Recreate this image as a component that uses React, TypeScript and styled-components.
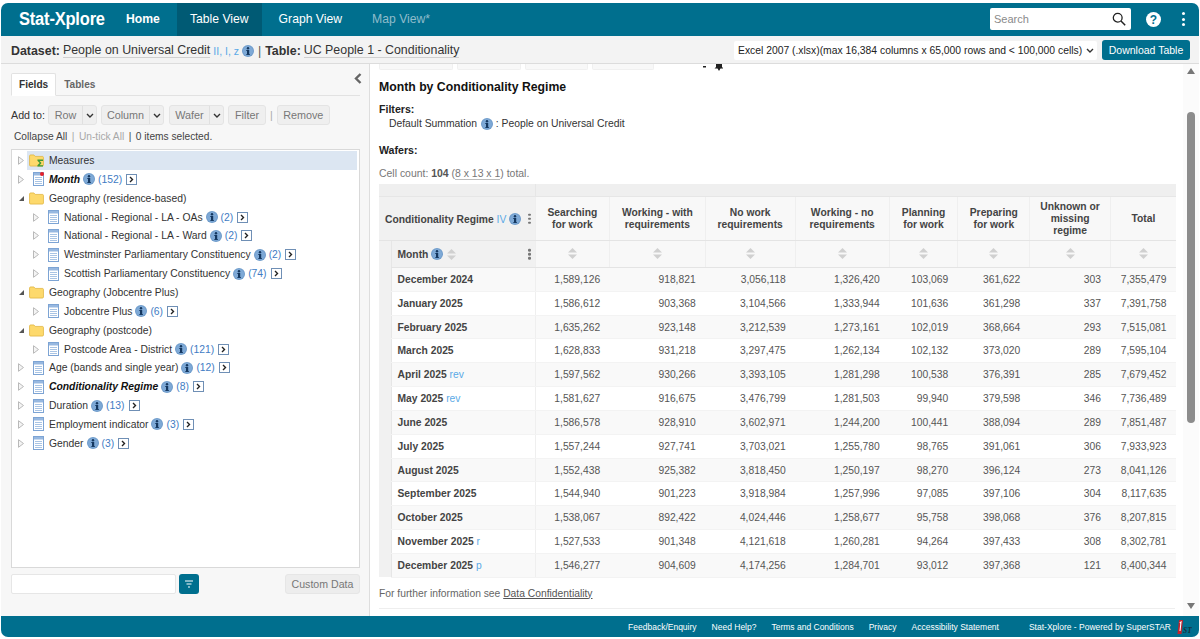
import React from "react";
import styled, { createGlobalStyle } from "styled-components";

const Global = createGlobalStyle`
  html, body { margin: 0; padding: 0; background: #fff; height: 100%; overflow: hidden; }
  body { font-family: "Liberation Sans", Arial, sans-serif; font-size: 11px; color: #333; }
  #root { height: 100%; }
`;

const Frame = styled.div`
  width: 1198px;
  height: 634px;
  margin: 3px 1px 2px;
  display: flex;
  flex-direction: column;
  background: #f7f7f7;
  border-radius: 7px;
  overflow: hidden;
`;

const TopBar = styled.header`
  height: 33px;
  flex: none;
  background: #006f8e;
  display: flex;
  align-items: stretch;
  color: #fff;
`;
const Brand = styled.div`
  width: 108px;
  padding-left: 18px;
  box-sizing: border-box;
  font-size: 18px;
  font-weight: 700;
  line-height: 32px;
  white-space: nowrap;
`;
const BrandText = styled.span`
  display: inline-block;
  transform: scaleX(0.915);
  transform-origin: left center;
  letter-spacing: -0.2px;
`;
const NavItem = styled.div<{ $active?: boolean; $dim?: boolean; $bold?: boolean; $px: number }>`
  display: flex;
  align-items: center;
  padding: 0 ${(p) => p.$px}px 1px;
  font-size: 12.2px;
  font-weight: ${(p) => (p.$bold ? 700 : 400)};
  background: ${(p) => (p.$active ? "#005a74" : "transparent")};
  color: ${(p) => (p.$dim ? "#8fbccb" : "#fff")};
`;
const TopRight = styled.div`
  margin-left: auto;
  padding-bottom: 1px;
  display: flex;
  align-items: center;
`;
const SearchBox = styled.div`
  width: 141px;
  height: 22px;
  background: #fff;
  border-radius: 2px;
  display: flex;
  align-items: center;
  justify-content: space-between;
  padding: 0 5px 0 4px;
  box-sizing: border-box;
  color: #8a8a8a;
  font-size: 11px;
`;
const HelpWrap = styled.div`
  margin-left: 15px;
  display: flex;
  align-items: center;
`;
const Kebab = styled.div`
  margin: 0 14px 0 21px;
  width: 3px;
  display: flex;
  flex-direction: column;
  gap: 2.5px;
`;
const KebabDot = styled.span<{ $color?: string; $size?: number }>`
  display: block;
  width: ${(p) => p.$size ?? 3}px;
  height: ${(p) => p.$size ?? 3}px;
  border-radius: 50%;
  background: ${(p) => p.$color ?? "#fff"};
`;

const SubBar = styled.div`
  height: 28px;
  flex: none;
  box-sizing: border-box;
  background: #f3f3f3;
  border-bottom: 1px solid #dcdcdc;
  display: flex;
  align-items: center;
  padding: 0 9px 0 10px;
  font-size: 12.4px;
  color: #333;
`;
const DatasetGroup = styled.div`
  display: flex;
  align-items: center;
  padding-top: 2px;
  white-space: nowrap;
`;
const Strong = styled.b`
  font-weight: 700;
  margin-right: 3px;
`;
const Dashed = styled.span`
  border-bottom: 1px solid #d0d0d0;
  line-height: 13px;
`;
const Annot = styled.span`
  color: #5aa9e6;
  font-size: 10.5px;
  margin: 0 3px;
`;
const Sep = styled.span`
  margin: 0 4px;
  color: #555;
`;
const SelectBox = styled.div`
  margin-left: auto;
  margin-top: 1px;
  width: 363px;
  height: 19px;
  box-sizing: border-box;
  background: #fff;
  border-radius: 2px;
  display: flex;
  align-items: center;
  justify-content: space-between;
  padding: 0 3px 0 4px;
  font-size: 10.35px;
  color: #222;
  white-space: nowrap;
`;
const PrimaryBtn = styled.div`
  margin-left: 5px;
  width: 88px;
  height: 20px;
  border-radius: 3px;
  background: #006f8e;
  color: #fff;
  font-size: 10.5px;
  display: flex;
  align-items: center;
  justify-content: center;
`;

const Main = styled.div`
  flex: 1;
  min-height: 0;
  display: flex;
`;

const Left = styled.aside`
  width: 369px;
  flex: none;
  box-sizing: border-box;
  background: #f7f7f7;
  border-right: 1px solid #dedede;
  padding: 9px 9px 0 10px;
  display: flex;
  flex-direction: column;
  position: relative;
`;
const Collapse = styled.div`
  position: absolute;
  right: 7px;
  top: 9px;
`;
const Tabs = styled.div`
  display: flex;
  height: 22px;
  border-bottom: 1px solid #e2e2e2;
  width: 349px;
  box-sizing: content-box;
`;
const Tab = styled.div<{ $active?: boolean }>`
  padding: 0 7px;
  font-size: 10.1px;
  font-weight: 700;
  line-height: 21px;
  height: 23px;
  box-sizing: border-box;
  color: ${(p) => (p.$active ? "#333" : "#666")};
  background: ${(p) => (p.$active ? "#fff" : "transparent")};
  border: 1px solid ${(p) => (p.$active ? "#e2e2e2" : "transparent")};
  border-bottom-color: ${(p) => (p.$active ? "#fff" : "transparent")};
  border-radius: 2px 2px 0 0;
`;
const AddRow = styled.div`
  display: flex;
  align-items: center;
  margin-top: 9px;
  height: 20px;
  font-size: 10.7px;
  color: #333;
`;
const AddLabel = styled.span`
  width: 33px;
  white-space: nowrap;
`;
const GreyBtn = styled.div<{ $w: number; $ml?: number }>`
  width: ${(p) => p.$w}px;
  margin-left: ${(p) => p.$ml ?? 4}px;
  height: 20px;
  box-sizing: border-box;
  background: #efefef;
  border: 1px solid #e4e4e4;
  border-radius: 3px;
  color: #777;
  font-size: 10.8px;
  display: flex;
  align-items: center;
`;
const BtnLabel = styled.span`
  flex: 1;
  text-align: center;
`;
const BtnCaret = styled.span`
  width: 13px;
  height: 100%;
  border-left: 1px solid #e0e0e0;
  display: flex;
  align-items: center;
  justify-content: center;
`;
const Divider = styled.span`
  margin-left: 4px;
  color: #aaa;
`;
const ActionRow = styled.div`
  display: flex;
  align-items: center;
  gap: 4.5px;
  margin: 4px 0 0 3px;
  height: 15px;
  font-size: 10.2px;
  color: #444;
`;
const Faint = styled.span`
  color: #a8a8a8;
`;
const TreeBox = styled.div`
  margin-top: 5px;
  width: 349px;
  height: 419px;
  box-sizing: border-box;
  background: #fff;
  border: 1px solid #d9d9d9;
  padding: 1px 2px 0 0;
`;
const TreeRow = styled.div<{ $level?: number }>`
  height: 18.87px;
  display: flex;
  align-items: center;
  padding-left: ${(p) => (p.$level ? 21 : 6)}px;
  font-size: 10.35px;
  color: #333;
  white-space: nowrap;
  position: relative;
`;
const Selection = styled.span`
  position: absolute;
  left: 15px;
  right: 0;
  top: 0;
  bottom: 0;
  background: #dce6f2;
`;
const Toggle = styled.span`
  width: 9px;
  height: 10px;
  flex: none;
  display: flex;
  align-items: center;
  position: relative;
`;
const TreeIconBox = styled.span`
  width: 16px;
  height: 16px;
  margin-left: 2px;
  padding-right: 1px;
  box-sizing: border-box;
  flex: none;
  display: flex;
  align-items: center;
  justify-content: flex-end;
  position: relative;
`;
const RowLabel = styled.span<{ $em?: boolean }>`
  margin-left: 4px;
  position: relative;
  font-weight: ${(p) => (p.$em ? 700 : 400)};
  font-style: ${(p) => (p.$em ? "italic" : "normal")};
  color: ${(p) => (p.$em ? "#111" : "#333")};
`;
const Count = styled.span`
  color: #3f7cc4;
  margin-left: 3px;
`;
const InfoWrap = styled.span<{ $ml?: number }>`
  display: inline-flex;
  margin-left: ${(p) => p.$ml ?? 3}px;
  vertical-align: -2px;
`;
const MoreBtn = styled.span`
  width: 9px;
  height: 9px;
  margin-left: 4px;
  border: 1px solid #6f8fb5;
  display: inline-flex;
  align-items: center;
  justify-content: center;
  background: #fff;
  flex: none;
`;
const SearchRow = styled.div`
  display: flex;
  align-items: center;
  margin-top: 6px;
`;
const FilterInput = styled.div`
  width: 165px;
  height: 20px;
  box-sizing: border-box;
  background: #fff;
  border: 1px solid #e6e6e6;
  border-radius: 2px;
`;
const FilterBtn = styled.div`
  margin-left: 3px;
  width: 20px;
  height: 20px;
  background: #006f8e;
  border-radius: 3px;
  display: flex;
  align-items: center;
  justify-content: center;
`;
const CustomBtn = styled.div`
  margin-left: auto;
  width: 75px;
  height: 20px;
  background: #ededed;
  border: 1px solid #e6e6e6;
  box-sizing: border-box;
  border-radius: 3px;
  color: #777;
  font-size: 10.6px;
  display: flex;
  align-items: center;
  justify-content: center;
`;

const Right = styled.section`
  flex: 1;
  min-width: 0;
  display: flex;
  background: #fff;
`;
const Content = styled.div`
  flex: 1;
  min-width: 0;
  box-sizing: border-box;
  padding: 0 8px 0 9px;
  display: flex;
  flex-direction: column;
  position: relative;
`;
const HiddenTabs = styled.div`
  display: flex;
  gap: 4px;
  height: 6px;
`;
const HiddenTab = styled.span<{ $w: number }>`
  width: ${(p) => p.$w}px;
  height: 6px;
  background: #f8f8f8;
  border: 1px solid #f0f0f0;
  border-top: 0;
  box-sizing: border-box;
  border-radius: 0 0 2px 2px;
`;
const Title = styled.h2`
  margin: 10px 0 0;
  font-size: 12.25px;
  line-height: 15px;
  font-weight: 700;
  color: #111;
`;
const MetaLabel = styled.div<{ $mt: number }>`
  margin-top: ${(p) => p.$mt}px;
  font-size: 10.6px;
  font-weight: 700;
  line-height: 13px;
  color: #222;
`;
const FilterLine = styled.div`
  margin: 1px 0 0 10px;
  font-size: 10.35px;
  line-height: 14px;
  color: #333;
  display: flex;
  align-items: center;
`;
const CellCount = styled.div`
  margin-top: 10px;
  padding-bottom: 5px;
  height: 12px;
  font-size: 10.45px;
  line-height: 13px;
  color: #777;
`;
const CountEm = styled.b`
  color: #555;
`;
const CountLink = styled.span`
  border-bottom: 1px solid #bbb;
`;
const Table = styled.table`
  border-collapse: collapse;
  table-layout: fixed;
  width: 797px;
  font-size: 10.3px;
`;
const TopStrip = styled.td`
  height: 12px;
  padding: 0;
  background: #efefef;
  border-bottom: 1px solid #e6e6e6;
`;
const TopStripEnd = styled(TopStrip)`
  border-left: 1px solid #e6e6e6;
`;
const CornerHead = styled.th`
  height: 43px;
  padding: 0 0 0 6px;
  background: #f1f1f1;
  border-bottom: 1px solid #e4e4e4;
  text-align: left;
  font-weight: 700;
  color: #444;
  white-space: nowrap;
  position: relative;
`;
const ColHead = styled.th`
  padding: 0 4px;
  background: #f8f8f8;
  border-left: 1px solid #efefef;
  border-bottom: 1px solid #e4e4e4;
  font-weight: 700;
  color: #444;
  line-height: 12px;
  text-align: center;
`;
const StubGutter = styled.td`
  padding: 0;
  background: #f1f1f1;
`;
const MonthHead = styled.th`
  height: 26px;
  padding: 0 0 0 6px;
  background: #f1f1f1;
  border-left: 1px solid #e6e6e6;
  border-bottom: 1px solid #e4e4e4;
  text-align: left;
  font-weight: 700;
  color: #444;
  white-space: nowrap;
  position: relative;
`;
const SortCell = styled.th`
  padding: 0;
  background: #f8f8f8;
  border-left: 1px solid #efefef;
  border-bottom: 1px solid #e4e4e4;
  text-align: center;
`;
const RowHead = styled.th<{ $odd: boolean }>`
  height: 22.84px;
  padding: 0 0 0 6px;
  box-sizing: content-box;
  text-align: left;
  font-weight: 700;
  color: #444;
  white-space: nowrap;
  background: ${(p) => (p.$odd ? "#fff" : "#f9f9f9")};
  border-left: 1px solid #e6e6e6;
  border-bottom: 1px solid #f3f3f3;
`;
const ValueCell = styled.td<{ $odd: boolean }>`
  padding: 0 9.5px 0 0;
  text-align: right;
  color: #555;
  background: ${(p) => (p.$odd ? "#fff" : "#f9f9f9")};
  border-bottom: 1px solid #f3f3f3;
`;
const FirstValue = styled(ValueCell)`
  border-left: 1px solid #efefef;
`;
const Rev = styled.span`
  font-weight: 400;
  color: #5aa9e6;
`;
const KebabCol = styled.span`
  position: absolute;
  right: 4px;
  top: 50%;
  transform: translateY(-50%);
  display: flex;
  flex-direction: column;
  gap: 1.5px;
`;
const FootNote = styled.div`
  margin-top: 9px;
  padding-bottom: 8px;
  border-bottom: 1px solid #eeeeee;
  font-size: 10.3px;
  line-height: 13px;
  color: #666;
`;
const NoteLink = styled.span`
  text-decoration: underline;
  color: #555;
`;
const Bell = styled.span`
  position: absolute;
  left: 333px;
  top: -2px;
`;
const Scroll = styled.div`
  width: 16px;
  flex: none;
  background: #fbfbfb;
  display: flex;
  flex-direction: column;
  align-items: center;
  padding-top: 4px;
  box-sizing: border-box;
`;
const Thumb = styled.div`
  width: 8px;
  margin-top: 38px;
  height: 311px;
  border-radius: 4px;
  background: #8c8c8c;
`;
const ScrollDown = styled.div`
  margin-top: auto;
  margin-bottom: 5px;
`;

const Footer = styled.footer`
  height: 21px;
  flex: none;
  background: #006f8e;
  color: #fff;
  font-size: 8.5px;
  display: flex;
  align-items: center;
  justify-content: flex-end;
  padding-right: 7px;
  white-space: nowrap;
`;
const FootLink = styled.span<{ $ml: number }>`
  margin-left: ${(p) => p.$ml}px;
`;
const FootLogo = styled.span`
  margin-left: 6px;
  display: flex;
`;

const Info = ({ size = 12 }: { size?: number }) => (
  <svg width={size} height={size} viewBox="0 0 12 12">
    <circle cx="6" cy="6" r="6" fill="#6f9ccb" />
    <circle cx="6" cy="6" r="5" fill="#7ea9d6" />
    <rect x="5" y="5" width="2.2" height="4.6" fill="#14375f" />
    <rect x="4.2" y="5" width="1.2" height="0.9" fill="#14375f" />
    <rect x="4.3" y="9" width="3.6" height="0.9" fill="#14375f" />
    <circle cx="6" cy="3.3" r="1.2" fill="#14375f" />
  </svg>
);
const Folder = ({ sigma }: { sigma?: boolean }) => (
  <svg width="15" height="13" viewBox="0 0 16 14">
    <path d="M.5 2.2C.5 1.5 1 1 1.6 1h3.6l1.4 1.6h7.8c.6 0 1.1.5 1.1 1.1v8.2c0 .6-.5 1.1-1.1 1.1H1.6C1 13 .5 12.5.5 11.9z" fill="#fdd96c" stroke="#dfb23c" strokeWidth="0.8" />
    {sigma && <path d="M9 6h6v1.5h-3.6l2 2.3-2 2.2H15v1.4H9v-1.2l2.4-2.4L9 7.3z" fill="#3d9a35" />}
  </svg>
);
const Doc = ({ flag }: { flag?: boolean }) => (
  <svg width="11" height="14" viewBox="0 0 11 14">
    <rect x="0.5" y="0.5" width="10" height="13" fill="#fff" stroke="#7da4d4" />
    <rect x="1" y="1" width="9" height="2.5" fill="#97b8e0" />
    <path d="M2 5.5h7M2 7.5h7M2 9.5h7M2 11.5h7" stroke="#a9c4e4" strokeWidth="1" />
    {flag && <circle cx="9" cy="2" r="2" fill="#e5202a" />}
  </svg>
);
const Arrow = ({ open }: { open?: boolean }) =>
  open ? (
    <svg width="7" height="7" viewBox="0 0 7 7"><path d="M6 1v5H1z" fill="#555" /></svg>
  ) : (
    <svg width="6" height="9" viewBox="0 0 6 9"><path d="M.5.7l5 3.8-5 3.8z" fill="#f4f4f4" stroke="#b9b9b9" /></svg>
  );
const More = () => (
  <MoreBtn>
    <svg width="7" height="7" viewBox="0 0 7 7"><path d="M2 1l2.5 2.5L2 6" fill="none" stroke="#222" strokeWidth="1.4" /></svg>
  </MoreBtn>
);
const Caret = () => (
  <svg width="8" height="5" viewBox="0 0 8 5"><path d="M1 1l3 3 3-3" fill="none" stroke="#333" strokeWidth="1.4" /></svg>
);
const Sort = () => (
  <svg width="11" height="11" viewBox="0 0 11 11">
    <path d="M5.5 0L10 4.6H1zM1 6.4h9L5.5 11z" fill="#d0d0d0" />
  </svg>
);
const VDots = () => (
  <KebabCol>
    <KebabDot $color="#777" $size={2.5} />
    <KebabDot $color="#777" $size={2.5} />
    <KebabDot $color="#777" $size={2.5} />
  </KebabCol>
);

type Node = {
  label: string;
  level?: number;
  kind: "folder" | "sigma" | "doc" | "flag";
  open?: boolean;
  em?: boolean;
  count?: string;
  selected?: boolean;
  info?: boolean;
};
const tree: Node[] = [
  { label: "Measures", kind: "sigma", selected: true },
  { label: "Month", kind: "flag", em: true, count: "(152)", info: true },
  { label: "Geography (residence-based)", kind: "folder", open: true },
  { label: "National - Regional - LA - OAs", level: 1, kind: "doc", count: "(2)", info: true },
  { label: "National - Regional - LA - Ward", level: 1, kind: "doc", count: "(2)", info: true },
  { label: "Westminster Parliamentary Constituency", level: 1, kind: "doc", count: "(2)", info: true },
  { label: "Scottish Parliamentary Constituency", level: 1, kind: "doc", count: "(74)", info: true },
  { label: "Geography (Jobcentre Plus)", kind: "folder", open: true },
  { label: "Jobcentre Plus", level: 1, kind: "doc", count: "(6)", info: true },
  { label: "Geography (postcode)", kind: "folder", open: true },
  { label: "Postcode Area - District", level: 1, kind: "doc", count: "(121)", info: true },
  { label: "Age (bands and single year)", kind: "doc", count: "(12)", info: true },
  { label: "Conditionality Regime", kind: "doc", em: true, count: "(8)", info: true },
  { label: "Duration", kind: "doc", count: "(13)", info: true },
  { label: "Employment indicator", kind: "doc", count: "(3)", info: true },
  { label: "Gender", kind: "doc", count: "(3)", info: true },
];

const cols = [12, 144, 74.5, 95.5, 90, 94, 68.5, 72, 80.5, 65.5];
const heads = [
  ["Searching", "for work"],
  ["Working - with", "requirements"],
  ["No work", "requirements"],
  ["Working - no", "requirements"],
  ["Planning", "for work"],
  ["Preparing", "for work"],
  ["Unknown or", "missing", "regime"],
  ["Total"],
];
const rows: [string, string, string[]][] = [
  ["December 2024", "", ["1,589,126", "918,821", "3,056,118", "1,326,420", "103,069", "361,622", "303", "7,355,479"]],
  ["January 2025", "", ["1,586,612", "903,368", "3,104,566", "1,333,944", "101,636", "361,298", "337", "7,391,758"]],
  ["February 2025", "", ["1,635,262", "923,148", "3,212,539", "1,273,161", "102,019", "368,664", "293", "7,515,081"]],
  ["March 2025", "", ["1,628,833", "931,218", "3,297,475", "1,262,134", "102,132", "373,020", "289", "7,595,104"]],
  ["April 2025", "rev", ["1,597,562", "930,266", "3,393,105", "1,281,298", "100,538", "376,391", "285", "7,679,452"]],
  ["May 2025", "rev", ["1,581,627", "916,675", "3,476,799", "1,281,503", "99,940", "379,598", "346", "7,736,489"]],
  ["June 2025", "", ["1,586,578", "928,910", "3,602,971", "1,244,200", "100,441", "388,094", "289", "7,851,487"]],
  ["July 2025", "", ["1,557,244", "927,741", "3,703,021", "1,255,780", "98,765", "391,061", "306", "7,933,923"]],
  ["August 2025", "", ["1,552,438", "925,382", "3,818,450", "1,250,197", "98,270", "396,124", "273", "8,041,126"]],
  ["September 2025", "", ["1,544,940", "901,223", "3,918,984", "1,257,996", "97,085", "397,106", "304", "8,117,635"]],
  ["October 2025", "", ["1,538,067", "892,422", "4,024,446", "1,258,677", "95,758", "398,068", "376", "8,207,815"]],
  ["November 2025", "r", ["1,527,533", "901,348", "4,121,618", "1,260,281", "94,264", "397,433", "308", "8,302,781"]],
  ["December 2025", "p", ["1,546,277", "904,609", "4,174,256", "1,284,701", "93,012", "397,368", "121", "8,400,344"]],
];

export default function App() {
  return (
    <>
      <Global />
      <Frame>
        <TopBar>
          <Brand><BrandText>Stat-Xplore</BrandText></Brand>
          <NavItem $bold $px={17}>Home</NavItem>
          <NavItem $active $px={13}>Table View</NavItem>
          <NavItem $px={17}>Graph View</NavItem>
          <NavItem $dim $px={13}>Map View*</NavItem>
          <TopRight>
            <SearchBox>
              Search
              <svg width="14" height="14" viewBox="0 0 14 14"><circle cx="5.7" cy="5.7" r="4.4" fill="none" stroke="#222" strokeWidth="1.3" /><path d="M9 9l4.2 4.2" stroke="#222" strokeWidth="1.5" /></svg>
            </SearchBox>
            <HelpWrap>
              <svg width="15" height="15" viewBox="0 0 15 15"><circle cx="7.5" cy="7.5" r="7.5" fill="#fff" /><text x="7.5" y="12" textAnchor="middle" fontFamily="Liberation Sans" fontWeight="700" fontSize="12" fill="#006f8e">?</text></svg>
            </HelpWrap>
            <Kebab><KebabDot /><KebabDot /><KebabDot /></Kebab>
          </TopRight>
        </TopBar>
        <SubBar>
          <DatasetGroup>
            <Strong>Dataset:</Strong>
            <Dashed>People on Universal Credit</Dashed>
            <Annot>II, I, z</Annot>
            <Info />
            <Sep>|</Sep>
            <Strong>Table:</Strong>
            <Dashed>UC People 1 - Conditionality</Dashed>
          </DatasetGroup>
          <SelectBox>
            Excel 2007 (.xlsx)(max 16,384 columns x 65,000 rows and &lt; 100,000 cells)
            <Caret />
          </SelectBox>
          <PrimaryBtn>Download Table</PrimaryBtn>
        </SubBar>
        <Main>
          <Left>
            <Collapse>
              <svg width="8" height="11" viewBox="0 0 8 11"><path d="M6.5 1L2 5.5 6.5 10" fill="none" stroke="#666" strokeWidth="2.4" /></svg>
            </Collapse>
            <Tabs>
              <Tab $active>Fields</Tab>
              <Tab>Tables</Tab>
            </Tabs>
            <AddRow>
              <AddLabel>Add to:</AddLabel>
              <GreyBtn $w={49} $ml={4}><BtnLabel>Row</BtnLabel><BtnCaret><Caret /></BtnCaret></GreyBtn>
              <GreyBtn $w={63}><BtnLabel>Column</BtnLabel><BtnCaret><Caret /></BtnCaret></GreyBtn>
              <GreyBtn $w={55} $ml={5}><BtnLabel>Wafer</BtnLabel><BtnCaret><Caret /></BtnCaret></GreyBtn>
              <GreyBtn $w={38}><BtnLabel>Filter</BtnLabel></GreyBtn>
              <Divider>|</Divider>
              <GreyBtn $w={53}><BtnLabel>Remove</BtnLabel></GreyBtn>
            </AddRow>
            <ActionRow>
              <span>Collapse All</span><Faint>|</Faint><Faint>Un-tick All</Faint><span>|</span><span>0 items selected.</span>
            </ActionRow>
            <TreeBox>
              {tree.map((n) => (
                <TreeRow key={n.label} $level={n.level}>
                  {n.selected && <Selection />}
                  <Toggle><Arrow open={n.open} /></Toggle>
                  <TreeIconBox>
                    {n.kind === "folder" && <Folder />}
                    {n.kind === "sigma" && <Folder sigma />}
                    {n.kind === "doc" && <Doc />}
                    {n.kind === "flag" && <Doc flag />}
                  </TreeIconBox>
                  <RowLabel $em={n.em}>{n.label}</RowLabel>
                  {n.info && <InfoWrap><Info /></InfoWrap>}
                  {n.count && <Count>{n.count}</Count>}
                  {n.kind !== "folder" && <More />}
                </TreeRow>
              ))}
            </TreeBox>
            <SearchRow>
              <FilterInput />
              <FilterBtn>
                <svg width="10" height="8" viewBox="0 0 10 8"><path d="M1 1h8M2.5 4h5M4 7h2" stroke="#fff" strokeWidth="1.2" /></svg>
              </FilterBtn>
              <CustomBtn>Custom Data</CustomBtn>
            </SearchRow>
          </Left>
          <Right>
            <Content>
              <HiddenTabs>
                <HiddenTab $w={74} /><HiddenTab $w={64} /><HiddenTab $w={63} /><HiddenTab $w={62} />
              </HiddenTabs>
              <Bell>
                <svg width="20" height="8" viewBox="0 0 20 8"><rect x="0" y="2" width="3" height="1.5" fill="#222" /><path d="M13 0h6v3l1.5 1.5h-3L16 7l-1.5-2.5h-3L13 3z" fill="#222" /></svg>
              </Bell>
              <Title>Month by Conditionality Regime</Title>
              <MetaLabel $mt={8}>Filters:</MetaLabel>
              <FilterLine>Default Summation<InfoWrap $ml={4}><Info /></InfoWrap>&nbsp;: People on Universal Credit</FilterLine>
              <MetaLabel $mt={13}>Wafers:</MetaLabel>
              <CellCount>Cell count: <CountEm>104</CountEm> (<CountLink>8 x 13 x 1</CountLink>) total.</CellCount>
              <Table>
                <colgroup>
                  {cols.map((w, i) => <col key={i} style={{ width: w }} />)}
                </colgroup>
                <tbody>
                  <tr>
                    <TopStrip colSpan={2} />
                    <TopStripEnd colSpan={8} />
                  </tr>
                  <tr>
                    <CornerHead colSpan={2}>
                      Conditionality Regime <Rev>IV</Rev><InfoWrap><Info /></InfoWrap>
                      <VDots />
                    </CornerHead>
                    {heads.map((h, i) => (
                      <ColHead key={i}>
                        {h.map((l, j) => <React.Fragment key={j}>{j > 0 && <br />}{l}</React.Fragment>)}
                      </ColHead>
                    ))}
                  </tr>
                  <tr>
                    <StubGutter />
                    <MonthHead>
                      Month<InfoWrap><Info /></InfoWrap><InfoWrap $ml={3}><Sort /></InfoWrap>
                      <VDots />
                    </MonthHead>
                    {heads.map((_, i) => <SortCell key={i}><Sort /></SortCell>)}
                  </tr>
                  {rows.map(([m, tag, vals], r) => (
                    <tr key={r}>
                      <StubGutter />
                      <RowHead $odd={r % 2 === 1}>
                        {m}{tag && <> <Rev>{tag}</Rev></>}
                      </RowHead>
                      {vals.map((v, i) =>
                        i === 0
                          ? <FirstValue key={i} $odd={r % 2 === 1}>{v}</FirstValue>
                          : <ValueCell key={i} $odd={r % 2 === 1}>{v}</ValueCell>
                      )}
                    </tr>
                  ))}
                </tbody>
              </Table>
              <FootNote>For further information see <NoteLink>Data Confidentiality</NoteLink></FootNote>
            </Content>
            <Scroll>
              <svg width="8" height="6" viewBox="0 0 8 6"><path d="M4 0l4 6H0z" fill="#777" /></svg>
              <Thumb />
              <ScrollDown>
                <svg width="8" height="6" viewBox="0 0 8 6"><path d="M0 0h8L4 6z" fill="#777" /></svg>
              </ScrollDown>
            </Scroll>
          </Right>
        </Main>
        <Footer>
          <FootLink $ml={0}>Feedback/Enquiry</FootLink>
          <FootLink $ml={15}>Need Help?</FootLink>
          <FootLink $ml={15}>Terms and Conditions</FootLink>
          <FootLink $ml={15}>Privacy</FootLink>
          <FootLink $ml={15}>Accessibility Statement</FootLink>
          <FootLink $ml={30}>Stat-Xplore - Powered by SuperSTAR</FootLink>
          <FootLogo>
            <svg width="15" height="16" viewBox="0 0 15 16"><path d="M2 1h4L4.5 15H.5z" fill="#c3222c" /><path d="M2.8 4l1.2-1-1 9" stroke="#fff" strokeWidth="1.1" fill="none" /><text x="6" y="13.5" fontFamily="Liberation Serif" fontStyle="italic" fontWeight="700" fontSize="7.5" fill="#16323f">ST</text></svg>
          </FootLogo>
        </Footer>
      </Frame>
    </>
  );
}
